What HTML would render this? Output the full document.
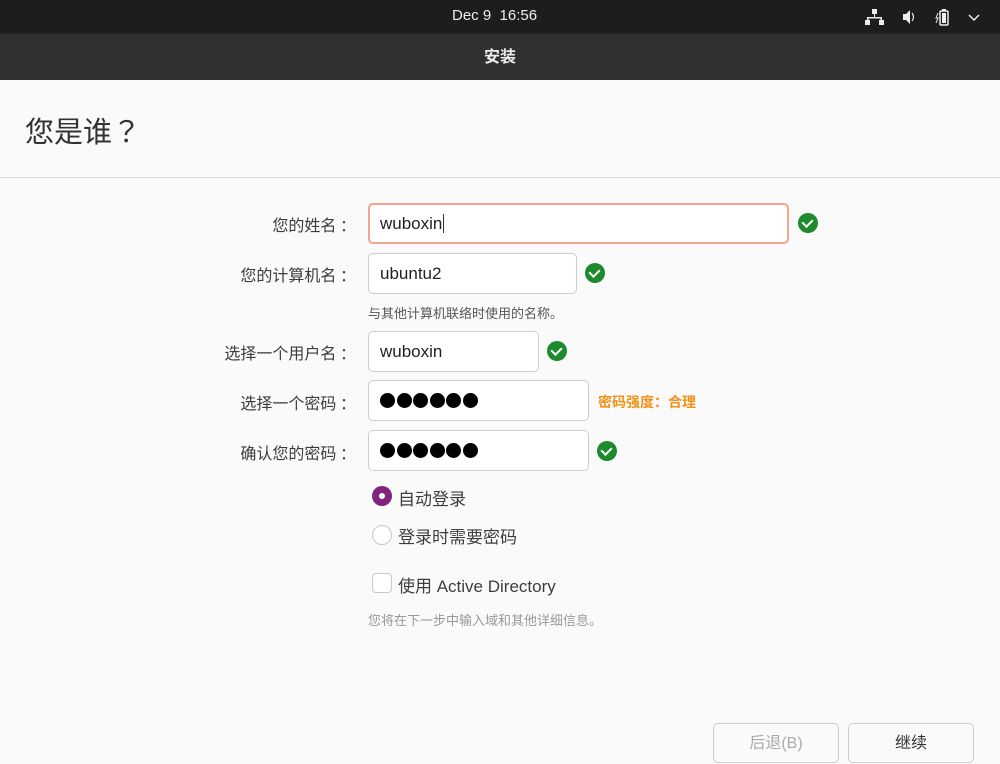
<!DOCTYPE html>
<html><head><meta charset="utf-8"><style>
*{margin:0;padding:0;box-sizing:border-box}
body{width:1000px;height:750px;overflow:hidden;background:#fafafa;font-family:"Liberation Sans","Noto Sans CJK SC",sans-serif;position:relative;color:#3d3d3d}
.top{position:absolute;left:0;top:0;width:1000px;height:33px;background:#1d1d1d;color:#eee;font-size:15px}
.title{position:absolute;left:0;top:33px;width:1000px;height:47px;background:#303030;border-top:2px solid #2a2a2a;color:#eee;font-size:16px;font-weight:bold;text-align:center;line-height:46px}
.abs{position:absolute}
.h1{left:25px;top:110px;font-size:29px;color:#333;font-family:"Noto Sans CJK JP",sans-serif;line-height:40px}
.hr{left:0;top:177px;width:1000px;height:1px;background:#dcdcdc}
.lbl{position:absolute;right:644px;font-size:16px;color:#3d3d3d;white-space:nowrap;font-family:"Noto Sans CJK SC",sans-serif;line-height:22px}
.in{position:absolute;left:368px;background:#fff;border:1px solid #cdcdcd;border-radius:5px;height:41px;font-size:17px;padding-left:11px;line-height:39px;color:#222}
.ok{position:absolute;width:20px;height:20px;border-radius:50%;background:#1e8a2e}
.ok:after{content:"";position:absolute;left:6px;top:4px;width:5px;height:8px;border:solid #fff;border-width:0 2.5px 2.5px 0;transform:rotate(45deg)}
.dots{padding:12px 0 0 11px;line-height:0}
.dots i{display:inline-block;width:15px;height:15px;border-radius:50%;background:#000;margin-right:1.5px}
.btn{position:absolute;top:723px;height:40px;background:#fafafa;border:1px solid #cdcdcd;border-radius:5px;text-align:center;font-size:16px;line-height:40px}
</style></head><body>
<div class="top"><div class="abs" style="left:452px;top:7px">Dec 9&nbsp; 16:56</div>
<svg class="abs" style="left:864px;top:8px" width="120" height="18">
<g fill="#eee"><rect x="8" y="1" width="5" height="5"/><rect x="10" y="6" width="1" height="4"/><rect x="3" y="9" width="15" height="1.5"/><rect x="3" y="9" width="1.5" height="3"/><rect x="16.5" y="9" width="1.5" height="3"/><rect x="1" y="12" width="5" height="5"/><rect x="15" y="12" width="5" height="5"/>
<path d="M39 6h3l4-4v14l-4-4h-3z"/><path d="M48 5q3 4 0 8" stroke="#eee" fill="none" stroke-width="1.2"/>
<rect x="78" y="1" width="4" height="2"/><rect x="76" y="3" width="8" height="14" rx="1" fill="none" stroke="#eee" stroke-width="1.5"/><rect x="78" y="5" width="4" height="10"/>
<path d="M74 5l-2 5h2l-2 5" stroke="#eee" fill="none"/>
<path d="M105 7l5 5 5-5" stroke="#eee" fill="none" stroke-width="1.5"/></g></svg></div>
<div class="title">安装</div>
<div class="abs h1">您是谁？</div>
<div class="abs hr"></div>

<div class="lbl" style="top:213px">您的姓名 ：</div>
<div class="in" style="top:203px;width:421px;border:2px solid #f5a58f;line-height:37px;padding-left:10px">wuboxin<span style="border-left:1px solid #333;margin-left:1px"></span></div>
<div class="ok" style="left:798px;top:213px"></div>

<div class="lbl" style="top:263px">您的计算机名 ：</div>
<div class="in" style="top:253px;width:209px">ubuntu2</div>
<div class="ok" style="left:585px;top:263px"></div>
<div class="abs" style="left:368px;top:303px;font-size:13px;color:#555;font-family:'Noto Sans CJK SC',sans-serif">与其他计算机联络时使用的名称。</div>

<div class="lbl" style="top:341px">选择一个用户名 ：</div>
<div class="in" style="top:331px;width:171px">wuboxin</div>
<div class="ok" style="left:547px;top:341px"></div>

<div class="lbl" style="top:391px">选择一个密码 ：</div>
<div class="in dots" style="top:380px;width:221px"><i></i><i></i><i></i><i></i><i></i><i></i></div>
<div class="abs" style="left:598px;top:392px;font-size:14px;font-weight:bold;color:#f39016;font-family:'Noto Sans CJK SC',sans-serif">密码强度：合理</div>

<div class="lbl" style="top:441px">确认您的密码 ：</div>
<div class="in dots" style="top:430px;width:221px"><i></i><i></i><i></i><i></i><i></i><i></i></div>
<div class="ok" style="left:597px;top:441px"></div>

<div class="abs" style="left:372px;top:486px;width:20px;height:20px;border-radius:50%;background:#80257e"><div style="position:absolute;left:7px;top:7px;width:6px;height:6px;border-radius:50%;background:#fff"></div></div>
<div class="abs" style="left:398px;top:485px;font-size:17px">自动登录</div>
<div class="abs" style="left:372px;top:525px;width:20px;height:20px;border-radius:50%;background:#fff;border:1px solid #c8c8c8"></div>
<div class="abs" style="left:398px;top:523px;font-size:17px">登录时需要密码</div>
<div class="abs" style="left:372px;top:573px;width:20px;height:20px;border-radius:4px;background:#fff;border:1px solid #c8c8c8"></div>
<div class="abs" style="left:398px;top:572px;font-size:17px">使用 Active Directory</div>
<div class="abs" style="left:368px;top:610px;font-size:13px;color:#999;font-family:'Noto Sans CJK SC',sans-serif">您将在下一步中输入域和其他详细信息。</div>

<div class="btn" style="left:713px;width:126px;color:#aaa">后退(B)</div>
<div class="btn" style="left:848px;width:126px;color:#333">继续</div>
</body></html>
